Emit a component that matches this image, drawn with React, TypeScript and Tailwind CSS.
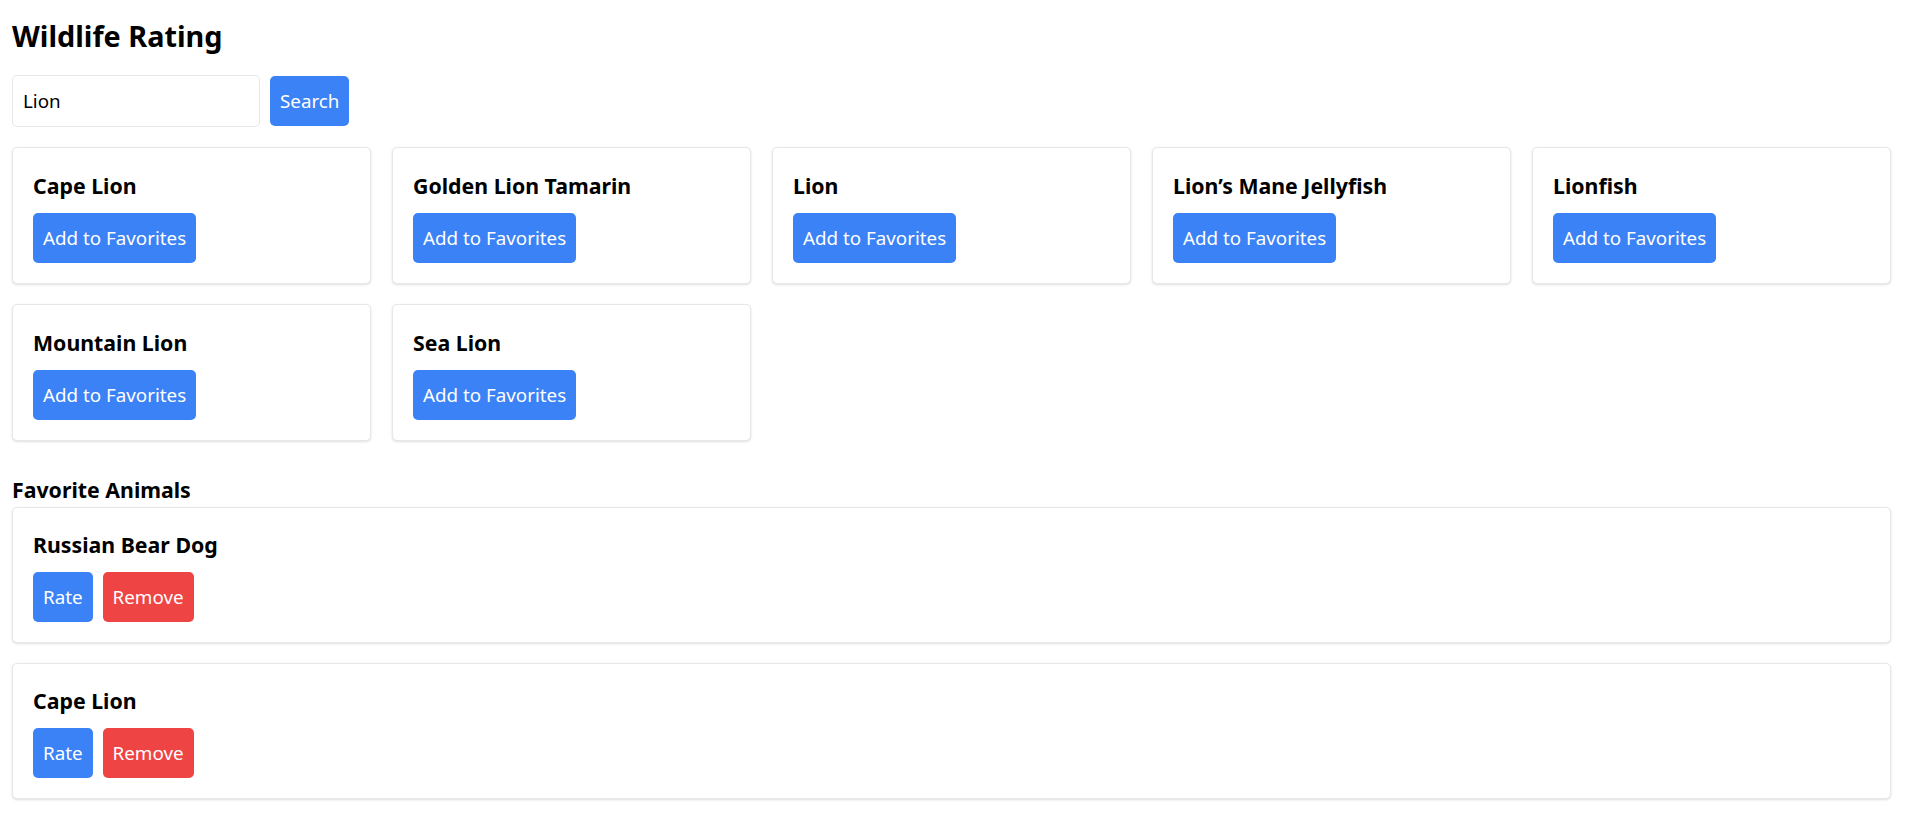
import React from "react";

const results = [
  "Cape Lion",
  "Golden Lion Tamarin",
  "Lion",
  "Lion’s Mane Jellyfish",
  "Lionfish",
  "Mountain Lion",
  "Sea Lion",
];

const favorites = ["Russian Bear Dog", "Cape Lion"];

export default function App() {
  return (
    <div
      className="min-h-screen bg-white text-black pl-[12px] pr-[20px] pt-[16px] pb-[14px]"
      style={{ fontFamily: '"Noto Sans", "Open Sans", Arial, sans-serif' }}
    >
      <h1 className="text-[28.8px] leading-[40px] font-bold mb-[19px]">Wildlife Rating</h1>
      <div className="flex items-center gap-[10px] mb-[20px]">
        <input
          type="text"
          defaultValue="Lion"
          className="w-[248px] h-[52px] border border-[#e5e7eb] rounded-[5px] px-[10px] text-[18.8px] leading-[30px] outline-none"
        />
        <button className="h-[50px] px-[10px] bg-[#3b82f6] text-white text-[18.8px] leading-[30px] rounded-[5px]">
          Search
        </button>
      </div>
      <div className="grid grid-cols-5 gap-x-[21px] gap-y-[20px]">
        {results.map((name) => (
          <div
            key={name}
            className="border border-[#e5e7eb] rounded-[5px] shadow-sm p-[20px] bg-white"
          >
            <h2 className="text-[21.3px] leading-[35px] font-bold mb-[10px]">{name}</h2>
            <button className="h-[50px] px-[10px] bg-[#3b82f6] text-white text-[18.8px] leading-[30px] rounded-[5px]">
              Add to Favorites
            </button>
          </div>
        ))}
      </div>
      <h2 className="text-[21.3px] leading-[35px] font-bold mt-[31px]">Favorite Animals</h2>
      <div className="flex flex-col gap-[20px]">
        {favorites.map((name, i) => (
          <div
            key={i}
            className="border border-[#e5e7eb] rounded-[5px] shadow-sm px-[20px] pt-[19px] pb-[20px] bg-white"
          >
            <h3 className="text-[21.3px] leading-[35px] font-bold mb-[10px]">{name}</h3>
            <div className="flex gap-[10px]">
              <button className="h-[50px] px-[10px] bg-[#3b82f6] text-white text-[18.8px] leading-[30px] rounded-[5px]">
                Rate
              </button>
              <button className="h-[50px] px-[10px] bg-[#ef4444] text-white text-[18.8px] leading-[30px] rounded-[5px]">
                Remove
              </button>
            </div>
          </div>
        ))}
      </div>
    </div>
  );
}
